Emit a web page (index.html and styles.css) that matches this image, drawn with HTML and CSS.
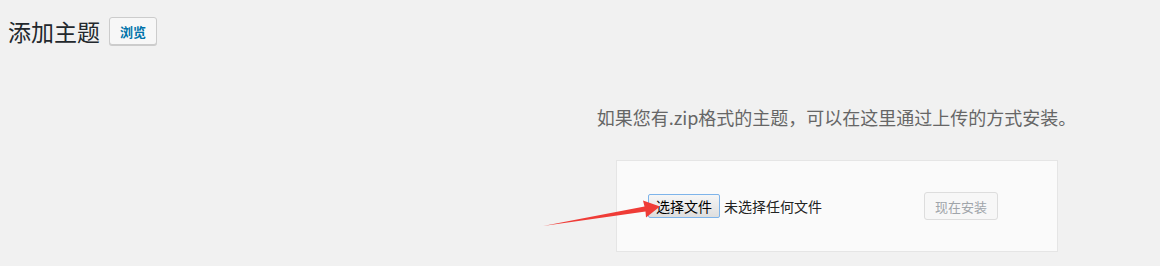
FILE: index.html
```html
<!DOCTYPE html>
<html lang="zh-CN">
<head>
<meta charset="utf-8">
<title>添加主题</title>
<link rel="stylesheet" href="styles.css">
</head>
<body>
<div class="page">
  <div class="header">
    <h1 class="title">添加主题</h1>
    <span class="browse-btn">浏览</span>
  </div>
  <div class="upload-area">
    <p class="install-help">如果您有.zip格式的主题，可以在这里通过上传的方式安装。</p>
    <div class="upload-form">
      <div class="file-input">
        <span class="file-btn">选择文件</span>
        <span class="file-label">未选择任何文件</span>
      </div>
      <span class="install-btn">现在安装</span>
    </div>
  </div>
  <svg class="arrow" width="1160" height="266" viewBox="0 0 1160 266">
    <polygon points="543,226 644.5,206.5 643,200.5 660,206.5 646,217.5 645.5,211.5" fill="#ef3c37"/>
  </svg>
</div>
</body>
</html>
```

FILE: styles.css
```css
html, body {
  margin: 0;
  padding: 0;
  background: #f1f1f1;
}
body {
  font-family: "Noto Sans CJK SC", "Noto Sans", sans-serif;
  color: #444;
}
.page {
  position: relative;
  width: 1160px;
  height: 266px;
  overflow: hidden;
}
.header {
  display: flex;
  align-items: center;
  padding: 17px 0 0 8px;
  height: 28px;
}
.title {
  margin: 0;
  font-size: 23px;
  font-weight: 400;
  line-height: 28px;
  color: #23282d;
}
.browse-btn {
  margin-left: 9px;
  box-sizing: border-box;
  height: 28px;
  padding: 0 10px;
  display: inline-flex;
  align-items: center;
  border: 1px solid #ccc;
  border-radius: 3px;
  background: #f7f7f7;
  box-shadow: 0 1px 0 #ccc;
  color: #0073aa;
  font-size: 13px;
  font-weight: 700;
}
.upload-area {
  margin-left: 513px;
  width: 647px;
  text-align: center;
}
.install-help {
  margin: 60px 0 31px;
  font-size: 18px;
  line-height: 24px;
  color: #666;
}
.upload-form {
  box-sizing: border-box;
  width: 442px;
  height: 92px;
  margin: 0 auto 0 103px;
  padding: 30px 31px 30px 31px;
  display: flex;
  align-items: center;
  background: #fafafa;
  border: 1px solid #e5e5e5;
  text-align: left;
}
.file-input {
  width: 276px;
  display: flex;
  align-items: center;
  font-size: 14px;
  color: #222;
}
.file-btn {
  box-sizing: border-box;
  height: 24px;
  width: 72px;
  display: inline-flex;
  align-items: center;
  justify-content: center;
  border: 1px solid #7eb4ea;
  border-radius: 2px;
  background: linear-gradient(#f6f6f6, #dedede);
  color: #000;
  font-size: 14px;
}
.file-label {
  margin-left: 4px;
}
.install-btn {
  box-sizing: border-box;
  height: 28px;
  width: 74px;
  display: inline-flex;
  align-items: center;
  justify-content: center;
  border: 1px solid #ddd;
  border-radius: 3px;
  background: #f7f7f7;
  color: #a0a5aa;
  font-size: 13px;
}
.arrow {
  position: absolute;
  left: 0;
  top: 0;
  pointer-events: none;
}
```
